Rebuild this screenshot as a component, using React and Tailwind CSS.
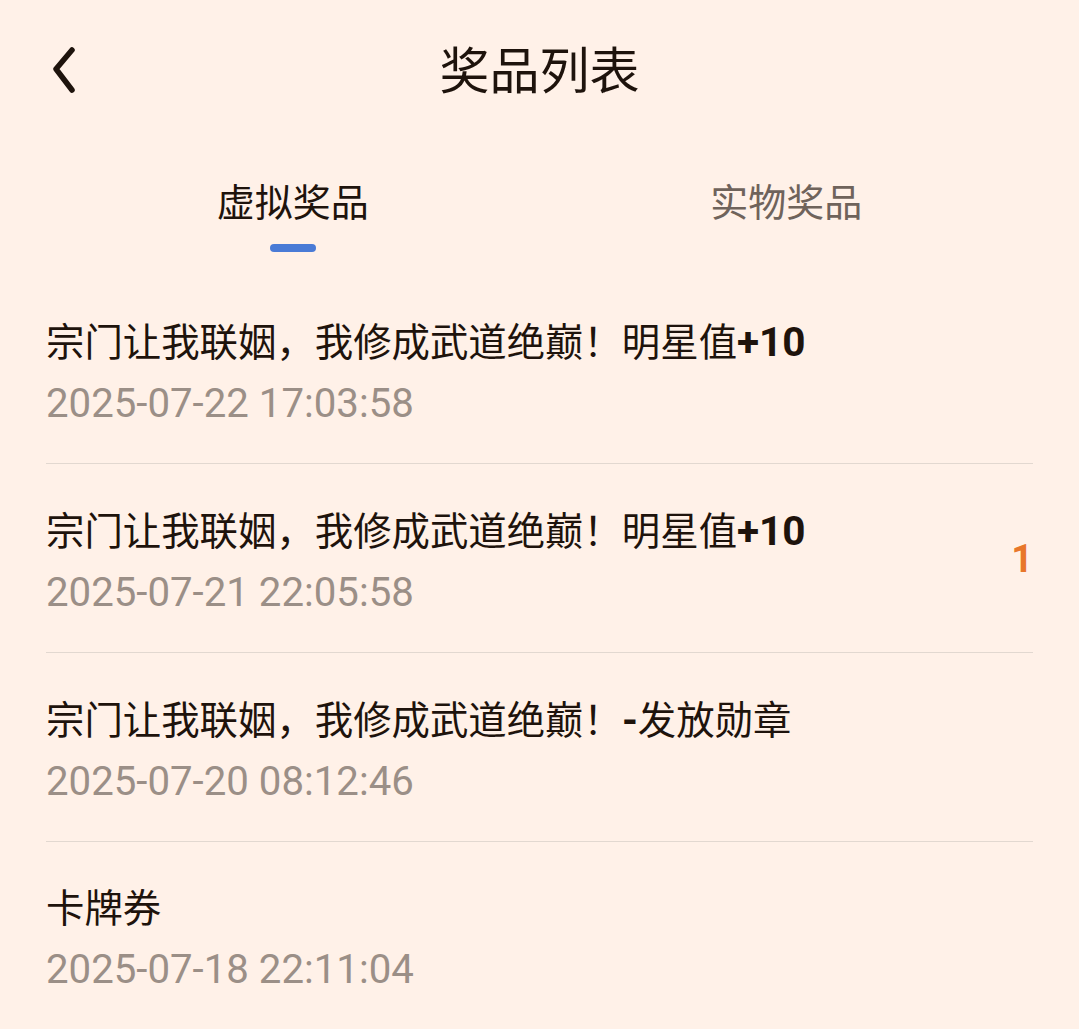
import React, { useState } from "react";

const records = [
  { name: "宗门让我联姻，我修成武道绝巅！明星值", tail: "+10", time: "2025-07-22 17:03:58", count: null },
  { name: "宗门让我联姻，我修成武道绝巅！明星值", tail: "+10", time: "2025-07-21 22:05:58", count: 1 },
  { name: "宗门让我联姻，我修成武道绝巅！", tail: "-", rest: "发放勋章", time: "2025-07-20 08:12:46", count: null },
  { name: "卡牌券", tail: "", time: "2025-07-18 22:11:04", count: null },
];

const tabs = ["虚拟奖品", "实物奖品"];

const App = () => {
  const [active, setActive] = useState(0);

  return (
    <div className="min-h-screen w-full bg-[#fff1e8] font-['Roboto','Noto_Sans_CJK_SC',sans-serif] text-[#1e130c]">
      {/* header */}
      <div className="grid grid-cols-[1fr_auto_1fr] items-center h-[144px] px-[50px]">
        <button className="flex items-center justify-start w-[40px] h-[60px]">
          <svg width="30" height="50" viewBox="0 0 30 50" fill="none">
            <path
              d="M22 3 L6 22 L22 43"
              stroke="#1e130c"
              strokeWidth="5.5"
              strokeLinecap="round"
              strokeLinejoin="round"
            />
          </svg>
        </button>
        <h1 className="text-[50px] leading-[60px] font-normal">奖品列表</h1>
        <div />
      </div>

      {/* tabs */}
      <div className="flex px-[46px] pt-[34px] h-[131px]">
        {tabs.map((t, i) => (
          <button
            key={t}
            onClick={() => setActive(i)}
            className="flex-1 flex flex-col items-center"
          >
            <span
              className={
                i === active
                  ? "text-[38px] leading-[50px] text-[#1e130c]"
                  : "text-[38px] leading-[50px] text-[#6f635b]"
              }
            >
              {t}
            </span>
            {i === active && (
              <span className="mt-[16px] w-[46px] h-[8px] rounded-full bg-[#4a7bd6]" />
            )}
          </button>
        ))}
      </div>

      {/* list */}
      <div className="px-[46px]">
        {records.map((r, i) => (
          <div
            key={i}
            className="flex items-center justify-between pt-[42px] pb-[34px] border-b border-[#e2d8d0]"
          >
            <div className="flex flex-col gap-[11px]">
              <div className="text-[38.4px] leading-[50px] whitespace-nowrap">
                {r.name}
                {r.tail && <span className="font-bold text-[40.5px]">{r.tail}</span>}
                {r.rest}
              </div>
              <div className="text-[40.2px] leading-[50px] text-[#9b8f87]">{r.time}</div>
            </div>
            {r.count !== null && (
              <span className="mb-[6px] text-[38px] font-bold text-[#e8772a]">{r.count}</span>
            )}
          </div>
        ))}
      </div>
    </div>
  );
};

export default App;
